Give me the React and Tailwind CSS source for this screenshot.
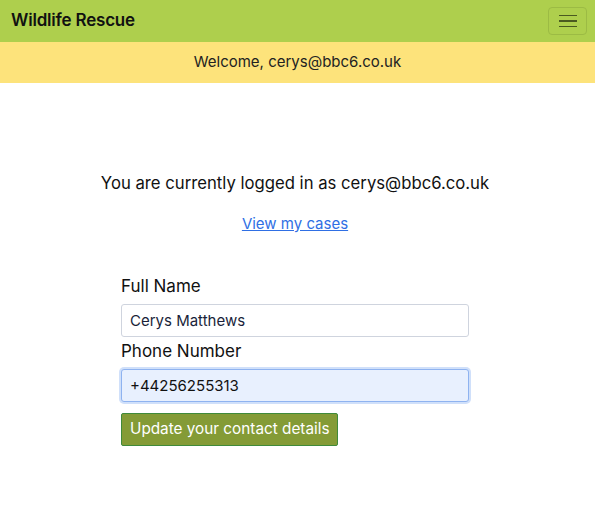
import { useState } from 'react';

export default function App() {
  const [name, setName] = useState('Cerys Matthews');
  const [phone, setPhone] = useState('+44256255313');

  return (
    <div className="min-h-[522px] bg-white text-[#111] font-['Inter','Roboto',sans-serif]">
      <nav className="h-[42px] bg-[#aecf4d] flex items-center justify-between pl-[11px] pr-[8px]">
        <span className="text-[17px] font-semibold text-[#111] tracking-[-0.2px]">Wildlife Rescue</span>
        <button className="w-[39px] h-[28px] rounded-[4px] border border-[#9cbb44] flex flex-col items-center justify-center gap-[4px]">
          <span className="block w-[18px] h-[1.5px] bg-[#4a5a20]" />
          <span className="block w-[18px] h-[1.5px] bg-[#4a5a20]" />
          <span className="block w-[18px] h-[1.5px] bg-[#4a5a20]" />
        </button>
      </nav>
      <div className="h-[41px] bg-[#fde37b] flex items-center justify-center text-[15px] text-[#222]">
        Welcome, cerys@bbc6.co.uk
      </div>

      <main className="flex flex-col items-center pt-[88px] pr-[5px]">
        <p className="text-[16.7px] leading-[24px] text-[#111]">You are currently logged in as cerys@bbc6.co.uk</p>
        <a href="#" className="mt-[17px] text-[15px] leading-[24px] text-[#2f6fe4] underline">View my cases</a>

        <form className="w-[348px] mt-[38px] flex flex-col" onSubmit={(e) => e.preventDefault()}>
          <label className="text-[17px] leading-[24px] mb-[6px]">Full Name</label>
          <input
            value={name}
            onChange={(e) => setName(e.target.value)}
            className="h-[33px] px-[8px] text-[15px] text-[#1a1f3a] border border-[#cfd4de] rounded-[3px] outline-none"
          />
          <label className="text-[17px] leading-[24px] mt-[2px] mb-[6px]">Phone Number</label>
          <input
            value={phone}
            onChange={(e) => setPhone(e.target.value)}
            className="h-[33px] px-[8px] text-[15px] text-[#111] bg-[#e8f0fe] border border-[#8fb3f0] rounded-[3px] outline-none shadow-[0_0_0_2px_rgba(120,165,240,0.35)]"
          />
          <button
            type="submit"
            className="mt-[11px] self-start h-[33px] px-[8px] text-[15.3px] text-white bg-[#849b36] border border-[#3f8a3a] rounded-[2px]"
          >
            Update your contact details
          </button>
        </form>
      </main>
    </div>
  );
}
